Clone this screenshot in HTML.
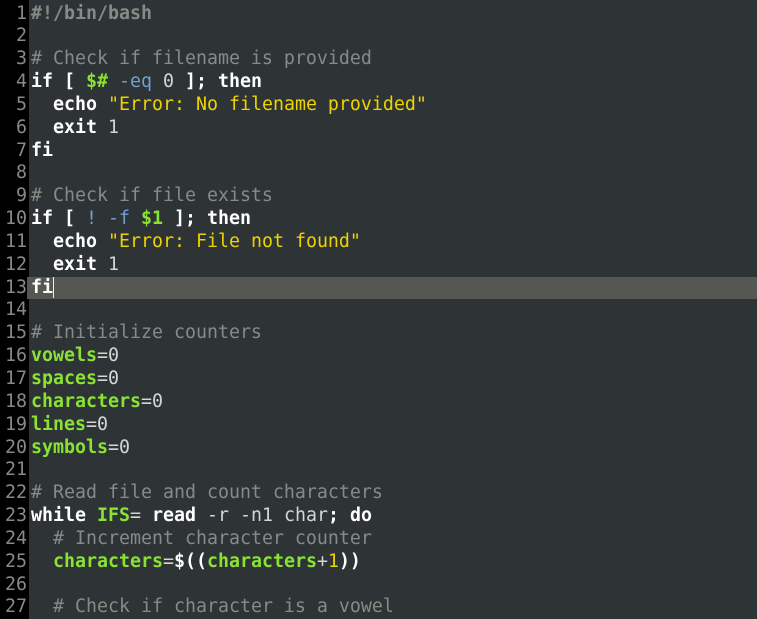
<!DOCTYPE html>
<html><head><style>
body{margin:0;width:757px;height:619px;overflow:hidden;background:#2e3436;font-family:"DejaVu Sans Mono","Liberation Mono",monospace;font-size:18.27px;color:#eeeeec}
.g{position:absolute;left:0;top:0;width:29px;height:619px;background:#000}
.c{position:absolute;left:0;top:2.5px;width:757px}
.l{height:22.85px;line-height:22.85px;white-space:pre;position:relative}
.n{display:inline-block;width:27px;text-align:right;color:#888a85;margin-right:4px}
.hl{background:#555753}
.k{font-weight:bold;color:#fff}
.cm{color:#888a85}
.sb{color:#888a85;font-weight:bold}
.v{color:#8ae234;font-weight:bold}
.o{color:#729fcf}
.d{color:#d3d7cf}
.s{color:#edd400}
.hl .n{background:#000}
.cur{border-right:1.5px solid #eee}
</style></head><body>
<div class="g"></div>
<div class="c">
<div class="l"><span class="n">1</span><span class="sb">#!/bin/bash</span></div>
<div class="l"><span class="n">2</span></div>
<div class="l"><span class="n">3</span><span class="cm"># Check if filename is provided</span></div>
<div class="l"><span class="n">4</span><span class="k">if [ </span><span class="v">$#</span> <span class="o">-eq</span> <span class="d">0</span><span class="k"> ]; then</span></div>
<div class="l"><span class="n">5</span>  <span class="k">echo</span> <span class="s">"Error: No filename provided"</span></div>
<div class="l"><span class="n">6</span>  <span class="k">exit</span> <span class="d">1</span></div>
<div class="l"><span class="n">7</span><span class="k">fi</span></div>
<div class="l"><span class="n">8</span></div>
<div class="l"><span class="n">9</span><span class="cm"># Check if file exists</span></div>
<div class="l"><span class="n">10</span><span class="k">if [ </span><span class="o">! -f</span> <span class="v">$1</span><span class="k"> ]; then</span></div>
<div class="l"><span class="n">11</span>  <span class="k">echo</span> <span class="s">"Error: File not found"</span></div>
<div class="l"><span class="n">12</span>  <span class="k">exit</span> <span class="d">1</span></div>
<div class="l hl"><span class="n">13</span><span class="k cur">fi</span></div>
<div class="l"><span class="n">14</span></div>
<div class="l"><span class="n">15</span><span class="cm"># Initialize counters</span></div>
<div class="l"><span class="n">16</span><span class="v">vowels</span><span class="d">=0</span></div>
<div class="l"><span class="n">17</span><span class="v">spaces</span><span class="d">=0</span></div>
<div class="l"><span class="n">18</span><span class="v">characters</span><span class="d">=0</span></div>
<div class="l"><span class="n">19</span><span class="v">lines</span><span class="d">=0</span></div>
<div class="l"><span class="n">20</span><span class="v">symbols</span><span class="d">=0</span></div>
<div class="l"><span class="n">21</span></div>
<div class="l"><span class="n">22</span><span class="cm"># Read file and count characters</span></div>
<div class="l"><span class="n">23</span><span class="k">while</span> <span class="v">IFS</span><span class="d">=</span> <span class="k">read</span><span class="d"> -r -n1 char</span><span class="k">; do</span></div>
<div class="l"><span class="n">24</span>  <span class="cm"># Increment character counter</span></div>
<div class="l"><span class="n">25</span>  <span class="v">characters</span><span class="d">=</span><span class="k">$((</span><span class="v">characters</span><span class="d">+</span><span class="s">1</span><span class="k">))</span></div>
<div class="l"><span class="n">26</span></div>
<div class="l"><span class="n">27</span>  <span class="cm"># Check if character is a vowel</span></div>
</div>
</body></html>
